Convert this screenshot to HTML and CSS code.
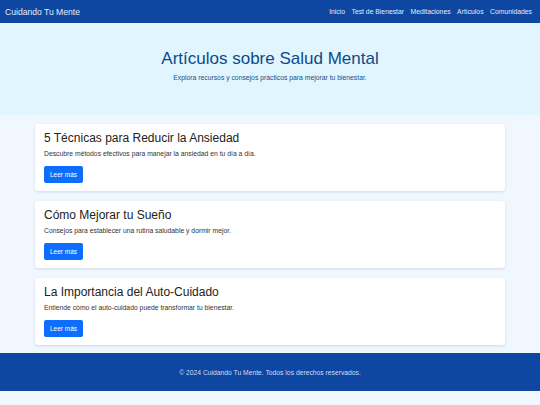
FILE: index.html
```html
<!DOCTYPE html>
<html lang="es">
<head>
<meta charset="utf-8">
<title>Cuidando Tu Mente</title>
<link rel="stylesheet" href="styles.css">
</head>
<body>
<header class="navbar">
  <span class="brand">Cuidando Tu Mente</span>
  <nav class="links">
    <a href="#">Inicio</a>
    <a href="#">Test de Bienestar</a>
    <a href="#">Meditaciones</a>
    <a href="#">Artículos</a>
    <a href="#">Comunidades</a>
  </nav>
</header>
<section class="hero">
  <h1>Artículos sobre Salud Mental</h1>
  <p>Explora recursos y consejos prácticos para mejorar tu bienestar.</p>
</section>
<main class="articles">
  <article class="card">
    <h2>5 Técnicas para Reducir la Ansiedad</h2>
    <p>Descubre métodos efectivos para manejar la ansiedad en tu día a día.</p>
    <a class="btn" href="#">Leer más</a>
  </article>
  <article class="card">
    <h2>Cómo Mejorar tu Sueño</h2>
    <p>Consejos para establecer una rutina saludable y dormir mejor.</p>
    <a class="btn" href="#">Leer más</a>
  </article>
  <article class="card">
    <h2>La Importancia del Auto-Cuidado</h2>
    <p>Entiende cómo el auto-cuidado puede transformar tu bienestar.</p>
    <a class="btn" href="#">Leer más</a>
  </article>
</main>
<footer class="footer">
  <p>© 2024 Cuidando Tu Mente. Todos los derechos reservados.</p>
</footer>
</body>
</html>
```

FILE: styles.css
```css
* { box-sizing: border-box; }
html, body {
  margin: 0;
  padding: 0;
  background: #f0f7ff;
  font-family: "Liberation Sans", Arial, sans-serif;
}
.navbar {
  height: 23px;
  background: #0d47a1;
  display: flex;
  align-items: center;
  justify-content: space-between;
  padding: 0 8px 0 5px;
}
.brand {
  color: #e3ecfa;
  font-size: 8.6px;
}
.links {
  display: flex;
  gap: 6.5px;
}
.links a {
  color: #e3ecfa;
  text-decoration: none;
  font-size: 6.8px;
}
.hero {
  background: #e1f5fe;
  height: 92px;
  text-align: center;
  padding-top: 26px;
}
.hero h1 {
  margin: 0;
  font-weight: normal;
  font-size: 17px;
  line-height: 20px;
  color: #0d4a8a;
}
.hero p {
  margin: 5px 0 0;
  font-size: 6.8px;
  color: #1a4f86;
}
.articles {
  padding: 9px 35px 8px;
  display: flex;
  flex-direction: column;
  gap: 10px;
}
.card {
  background: #fff;
  border-radius: 3px;
  box-shadow: 0 1px 3px rgba(0, 0, 0, 0.12);
  height: 67px;
  padding: 7px 9px;
}
.card h2 {
  margin: 0;
  font-weight: normal;
  font-size: 12px;
  line-height: 15px;
  color: #222;
}
.card p {
  margin: 4px 0 0;
  font-size: 6.8px;
  line-height: 8px;
  color: #333;
}
.btn {
  display: inline-block;
  margin-top: 8px;
  background: #0d6efd;
  color: #fff;
  font-size: 6.5px;
  text-decoration: none;
  border-radius: 2px;
  width: 39px;
  height: 17px;
  line-height: 17px;
  text-align: center;
}
.footer {
  background: #0d47a1;
  height: 38px;
  display: flex;
  align-items: center;
  justify-content: center;
}
.footer p {
  margin: 0;
  font-size: 6.75px;
  color: #cfdcf3;
}
```
